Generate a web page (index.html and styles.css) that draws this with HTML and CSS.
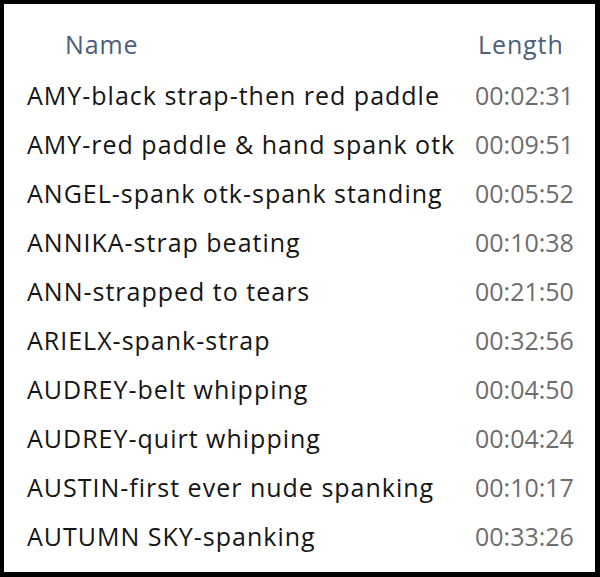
FILE: index.html
```html
<!DOCTYPE html>
<html lang="en">
<head>
  <meta charset="UTF-8">
  <title>Files</title>
  <link rel="stylesheet" href="styles.css">
</head>
<body>
  <div class="file-list">
    <div class="list-header">
      <span class="col-name">Name</span>
      <span class="col-length">Length</span>
    </div>

    <div class="row"><span class="name">AMY-black strap-then red paddle</span><span class="length">00:02:31</span></div>
    <div class="row"><span class="name">AMY-red paddle &amp; hand spank otk</span><span class="length">00:09:51</span></div>
    <div class="row"><span class="name">ANGEL-spank otk-spank standing</span><span class="length">00:05:52</span></div>
    <div class="row"><span class="name">ANNIKA-strap beating</span><span class="length">00:10:38</span></div>
    <div class="row"><span class="name">ANN-strapped to tears</span><span class="length">00:21:50</span></div>
    <div class="row"><span class="name">ARIELX-spank-strap</span><span class="length">00:32:56</span></div>
    <div class="row"><span class="name">AUDREY-belt whipping</span><span class="length">00:04:50</span></div>
    <div class="row"><span class="name">AUDREY-quirt whipping</span><span class="length">00:04:24</span></div>
    <div class="row"><span class="name">AUSTIN-first ever nude spanking</span><span class="length">00:10:17</span></div>
    <div class="row"><span class="name">AUTUMN SKY-spanking</span><span class="length">00:33:26</span></div>
  </div>
</body>
</html>
```

FILE: styles.css
```css
* {
  box-sizing: border-box;
}

body {
  margin: 0;
  background: #000;
  font-family: "Open Sans", "Noto Sans", sans-serif;
}

/* Explorer-style details list */
.file-list {
  width: 600px;
  height: 577px;
  border: solid #000;
  border-width: 4px 5px 5px 4px;
  background: #fff;
  padding-top: 13px;
}

.list-header {
  display: flex;
  height: 53px;
  align-items: center;
  color: #4c607a;
  font-size: 25px;
  letter-spacing: 0.9px;
}

.col-name {
  padding-left: 61px;
  flex: 1;
}

.col-length {
  width: 117px;
}

.row {
  display: flex;
  height: 49px;
  align-items: center;
  font-size: 25px;
}

.name {
  flex: 1;
  padding-left: 23px;
  color: #151515;
  letter-spacing: 1px;
  white-space: nowrap;
}

.length {
  width: 120px;
  color: #6d6d6d;
}
```
